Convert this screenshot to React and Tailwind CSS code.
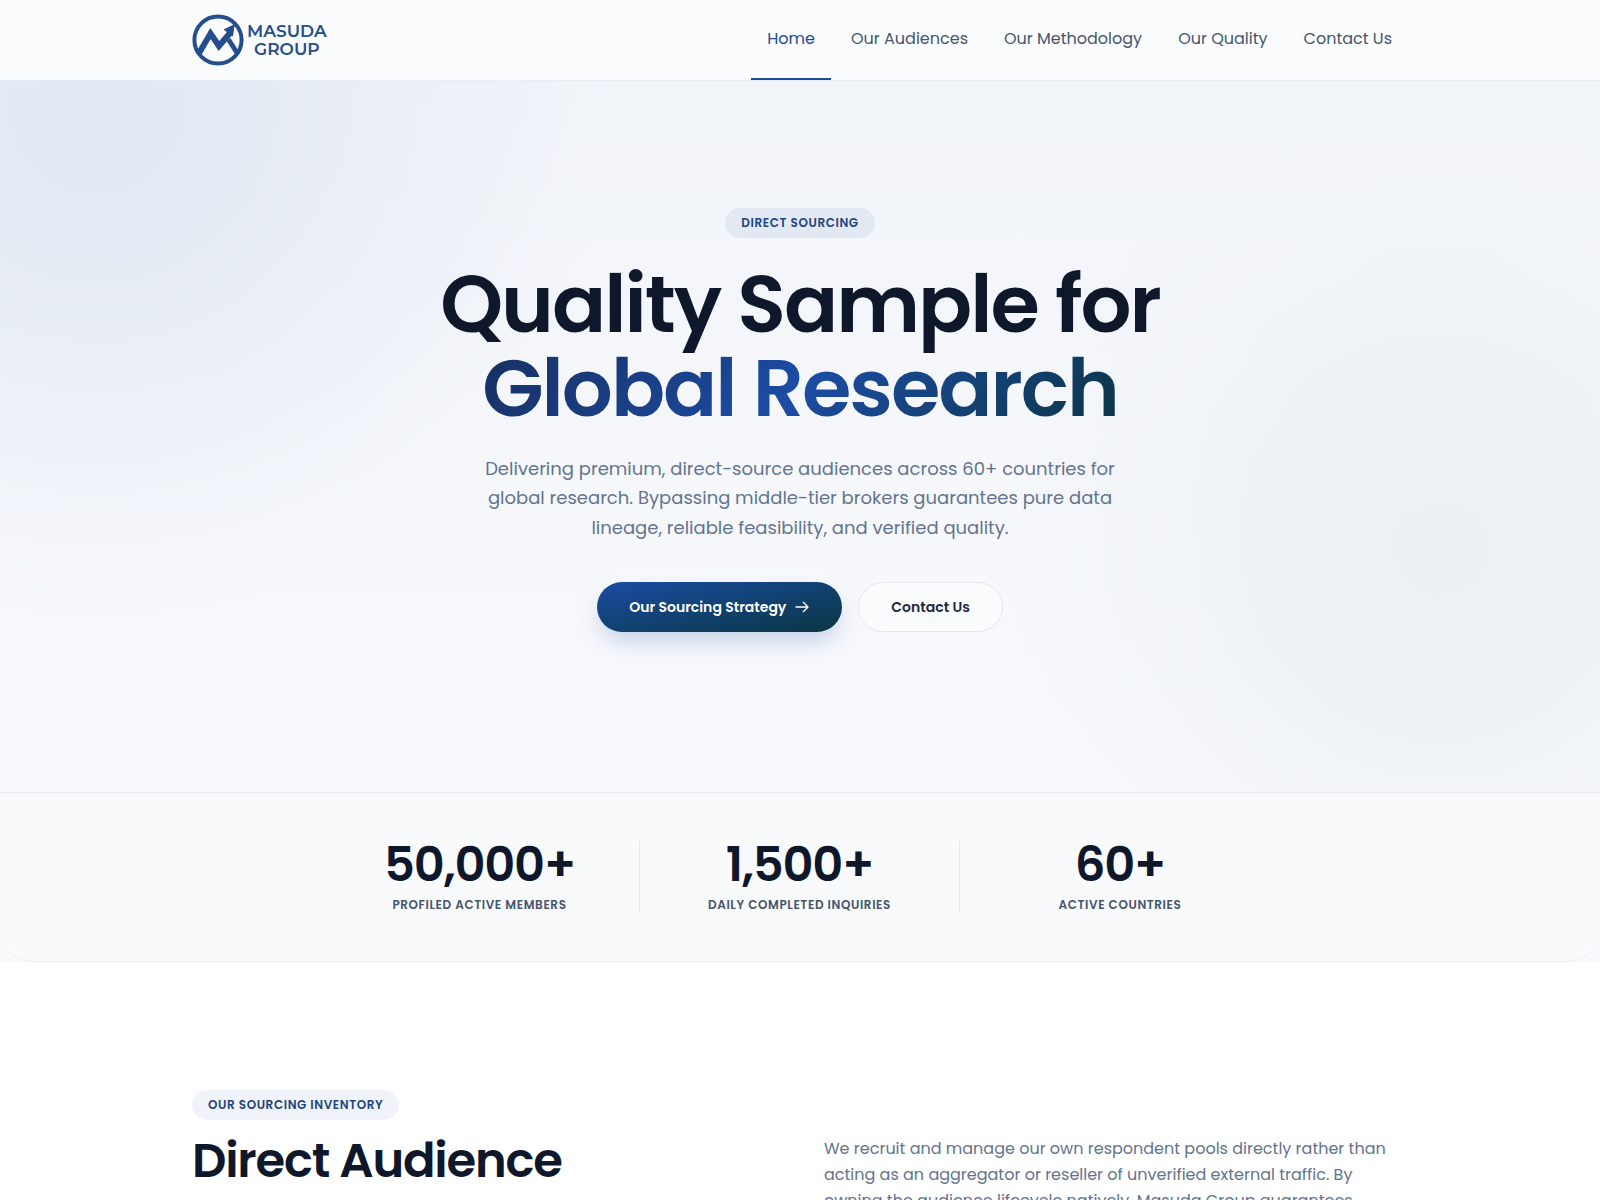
const links = ["Our Audiences", "Our Methodology", "Our Quality", "Contact Us"];

const stats = [
  { value: "50,000+", label: "Profiled Active Members" },
  { value: "1,500+", label: "Daily Completed Inquiries" },
  { value: "60+", label: "Active Countries" },
];

function Logo() {
  return (
    <a href="#home" className="flex items-center gap-[3px] text-[#254e8c]">
      <svg viewBox="0 0 52 52" className="h-[52px] w-[52px]" fill="none" aria-hidden="true">
        <circle cx="26" cy="26" r="23.6" stroke="currentColor" strokeWidth="4" />
        <path d="M6.5 40 L18.5 19.5 L27 32 L38.5 18.5" stroke="currentColor" strokeWidth="6" strokeLinejoin="miter" />
        <path d="M31.5 15.4 L42.8 10 L41 22.6 Z" fill="currentColor" />
        <path d="M36.4 25.4 L45.5 39.5" stroke="currentColor" strokeWidth="4.8" />
      </svg>
      <span className="flex flex-col items-center font-[Montserrat,Poppins,sans-serif] text-[17px] font-semibold leading-[18px]">
        <span>MASUDA</span>
        <span>GROUP</span>
      </span>
    </a>
  );
}

function ArrowIcon() {
  return (
    <svg viewBox="0 0 24 24" className="h-4 w-4" fill="none" stroke="currentColor" strokeWidth="2" strokeLinecap="round" strokeLinejoin="round" aria-hidden="true">
      <path d="M14 5l7 7m0 0l-7 7m7-7H3" />
    </svg>
  );
}

function Header() {
  return (
    <header className="relative bg-[#fbfcfe] shadow-[0_1px_0_#e8edf5]">
      <div className="mx-auto flex h-20 max-w-7xl items-stretch justify-between px-8">
        <Logo />
        <nav className="flex gap-1 text-base text-slate-600">
          <a href="#home" className="flex items-center border-b-2 border-[#1e4b96] px-4 text-[#1e4b96]">
            Home
          </a>
          {links.map((label) => (
            <a key={label} href="#" className="flex items-center border-b-2 border-transparent px-4">
              {label}
            </a>
          ))}
        </nav>
      </div>
    </header>
  );
}

function Pill({ children, className }) {
  return (
    <span className={`inline-flex h-[30px] items-center rounded-full px-4 text-xs font-semibold uppercase tracking-wider text-[#1d4480] ${className}`}>
      {children}
    </span>
  );
}

function Hero() {
  return (
    <section className="bg-[radial-gradient(circle_at_6%_4%,#e3e9f3_0%,#e5ebf4_8%,transparent_31%),radial-gradient(circle_at_90%_66%,#ebf0f4_0%,#edf1f5_10%,transparent_29%),linear-gradient(to_bottom,#f1f4f9,#f9fafd)]">
      <div className="mx-auto flex max-w-5xl flex-col items-center px-8 pb-40 pt-32 text-center">
        <Pill className="bg-[#e3e9f3]">Direct Sourcing</Pill>
        <h1 className="mt-6 text-[80px] font-semibold leading-[84px] tracking-tight text-slate-900">
          <span className="block">Quality Sample for</span>
          <span className="inline-block bg-[linear-gradient(135deg,#172f60,#1c4ca3_50%,#0b3544)] bg-clip-text text-transparent">
            Global Research
          </span>
        </h1>
        <p className="mt-6 max-w-2xl text-lg leading-relaxed text-slate-500">
          Delivering premium, direct-source audiences across 60+ countries for
          <br />
          global research. Bypassing middle-tier brokers guarantees pure data
          <br />
          lineage, reliable feasibility, and verified quality.
        </p>
        <div className="mt-10 flex gap-4 text-sm font-semibold">
          <button type="button" className="flex h-[50px] items-center gap-2 rounded-full bg-gradient-to-br from-[#1c4ca3] to-[#0b3544] px-8 text-white shadow-[0_12px_24px_-4px_rgba(28,86,163,0.25)]">
            Our Sourcing Strategy
            <ArrowIcon />
          </button>
          <button type="button" className="h-[50px] rounded-full border border-slate-200 bg-[#fafbfc] px-8 text-slate-800">
            Contact Us
          </button>
        </div>
      </div>
    </section>
  );
}

function Stats() {
  return (
    <section className="bg-slate-50">
      <div className="rounded-b-[32px] border-y border-[#e9edf3] bg-[#f9fafc] py-12">
        <dl className="mx-auto grid max-w-[960px] grid-cols-3 divide-x divide-slate-200">
          {stats.map((stat) => (
            <div key={stat.label} className="flex flex-col-reverse items-center gap-2">
              <dt className="text-xs font-semibold uppercase leading-4 tracking-wider text-slate-600">{stat.label}</dt>
              <dd className="text-5xl font-semibold leading-[48px] tracking-tight text-slate-900">{stat.value}</dd>
            </div>
          ))}
        </dl>
      </div>
    </section>
  );
}

function Inventory() {
  return (
    <section className="bg-white">
      <div className="mx-auto grid max-w-7xl grid-cols-2 gap-12 px-8 pt-32">
        <div>
          <Pill className="bg-[#f0f3fa]">Our Sourcing Inventory</Pill>
          <h2 className="mt-4 text-5xl font-semibold leading-[50px] tracking-tight text-slate-900">Direct Audience</h2>
        </div>
        <p className="mt-[46px] text-base leading-[26px] text-slate-500">
          We recruit and manage our own respondent pools directly rather than
          <br />
          acting as an aggregator or reseller of unverified external traffic. By
          <br />
          owning the audience lifecycle natively, Masuda Group guarantees
        </p>
      </div>
    </section>
  );
}

export default function App() {
  return (
    <div className="min-h-screen bg-white font-[Poppins,Inter,sans-serif]">
      <Header />
      <main>
        <Hero />
        <Stats />
        <Inventory />
      </main>
    </div>
  );
}
